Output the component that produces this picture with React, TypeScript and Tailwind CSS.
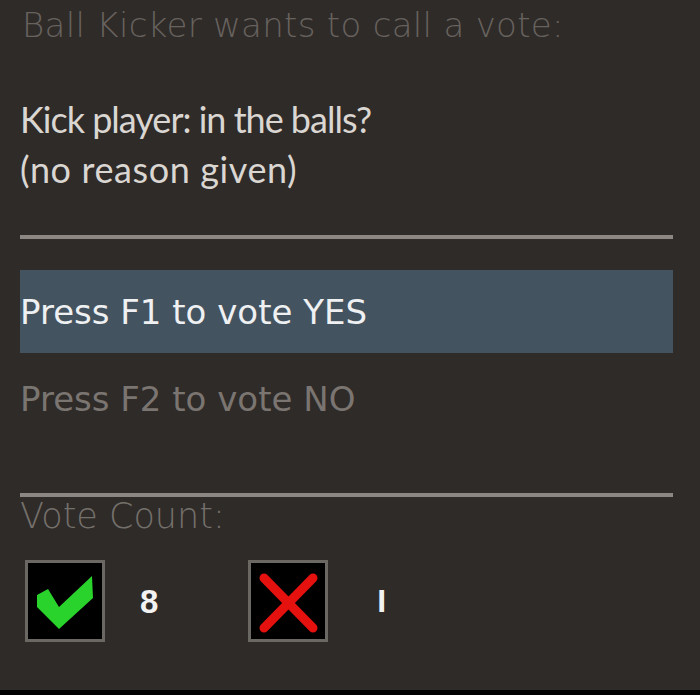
import React from 'react';

function CheckIcon() {
    return (
        <svg viewBox="0 0 74 76" className="h-full w-full">
            <polygon
                points="9,32 20,26 31,44 64,13 65,35 31,66 9,44"
                fill="#2ad32c"
            />
        </svg>
    );
}

function CrossIcon() {
    return (
        <svg viewBox="0 0 74 76" className="h-full w-full">
            <g stroke="#e5110f" strokeWidth="9" strokeLinecap="round">
                <line x1="13" y1="15" x2="62" y2="65" />
                <line x1="62" y1="15" x2="13" y2="65" />
            </g>
        </svg>
    );
}

function VoteBox({ children }: { children: React.ReactNode }) {
    return (
        <div className="h-[82px] w-[80px] border-[3px] border-[#6b6763] bg-black">
            {children}
        </div>
    );
}

export default function App() {
    return (
        <div className="flex h-[695px] w-[700px] flex-col overflow-hidden bg-[#2f2b29]">
            <div className="flex flex-1 flex-col px-[20px]">
                <p className="mt-[5px] pl-[2px] font-['DejaVu_Sans'] text-[34px] font-extralight leading-[40px] tracking-[0.3px] text-[#67625e]">
                    Ball Kicker wants to call a vote:
                </p>
                <div className="mt-[49px] font-['Lato'] text-[36px] leading-[50px] text-[#dad6d2]">
                    <p className="tracking-[-1px]">Kick player: in the balls?</p>
                    <p className="tracking-[0.6px]">(no reason given)</p>
                </div>
                <div className="mt-[41px] h-[4px] w-[653px] bg-[#8c8782]" />
                <div className="mt-[31px] flex h-[83px] w-[653px] items-center bg-[#445360]">
                    <span className="font-['DejaVu_Sans'] text-[34px] leading-none text-[#eef0f2]">
                        Press F1 to vote YES
                    </span>
                </div>
                <p className="mt-[26px] font-['DejaVu_Sans'] text-[34px] leading-[40px] text-[#7b7571]">
                    Press F2 to vote NO
                </p>
                <div className="mt-[74px] h-[4px] w-[653px] bg-[#8c8782]" />
                <p className="-mt-[1px] font-['DejaVu_Sans'] text-[35px] font-extralight leading-[40px] text-[#74706b]">
                    Vote Count:
                </p>
                <div className="mt-[24px] flex items-center">
                    <div className="ml-[5px]">
                        <VoteBox>
                            <CheckIcon />
                        </VoteBox>
                    </div>
                    <span className="ml-[35px] font-['Liberation_Sans'] text-[33px] font-bold leading-none text-[#f2f2f2]">
                        8
                    </span>
                    <div className="ml-[90px]">
                        <VoteBox>
                            <CrossIcon />
                        </VoteBox>
                    </div>
                    <span className="ml-[49px] font-['Liberation_Sans'] text-[32px] font-bold leading-none text-[#f2f2f2]">
                        I
                    </span>
                </div>
            </div>
            <div className="h-[5px] bg-black" />
        </div>
    );
}
